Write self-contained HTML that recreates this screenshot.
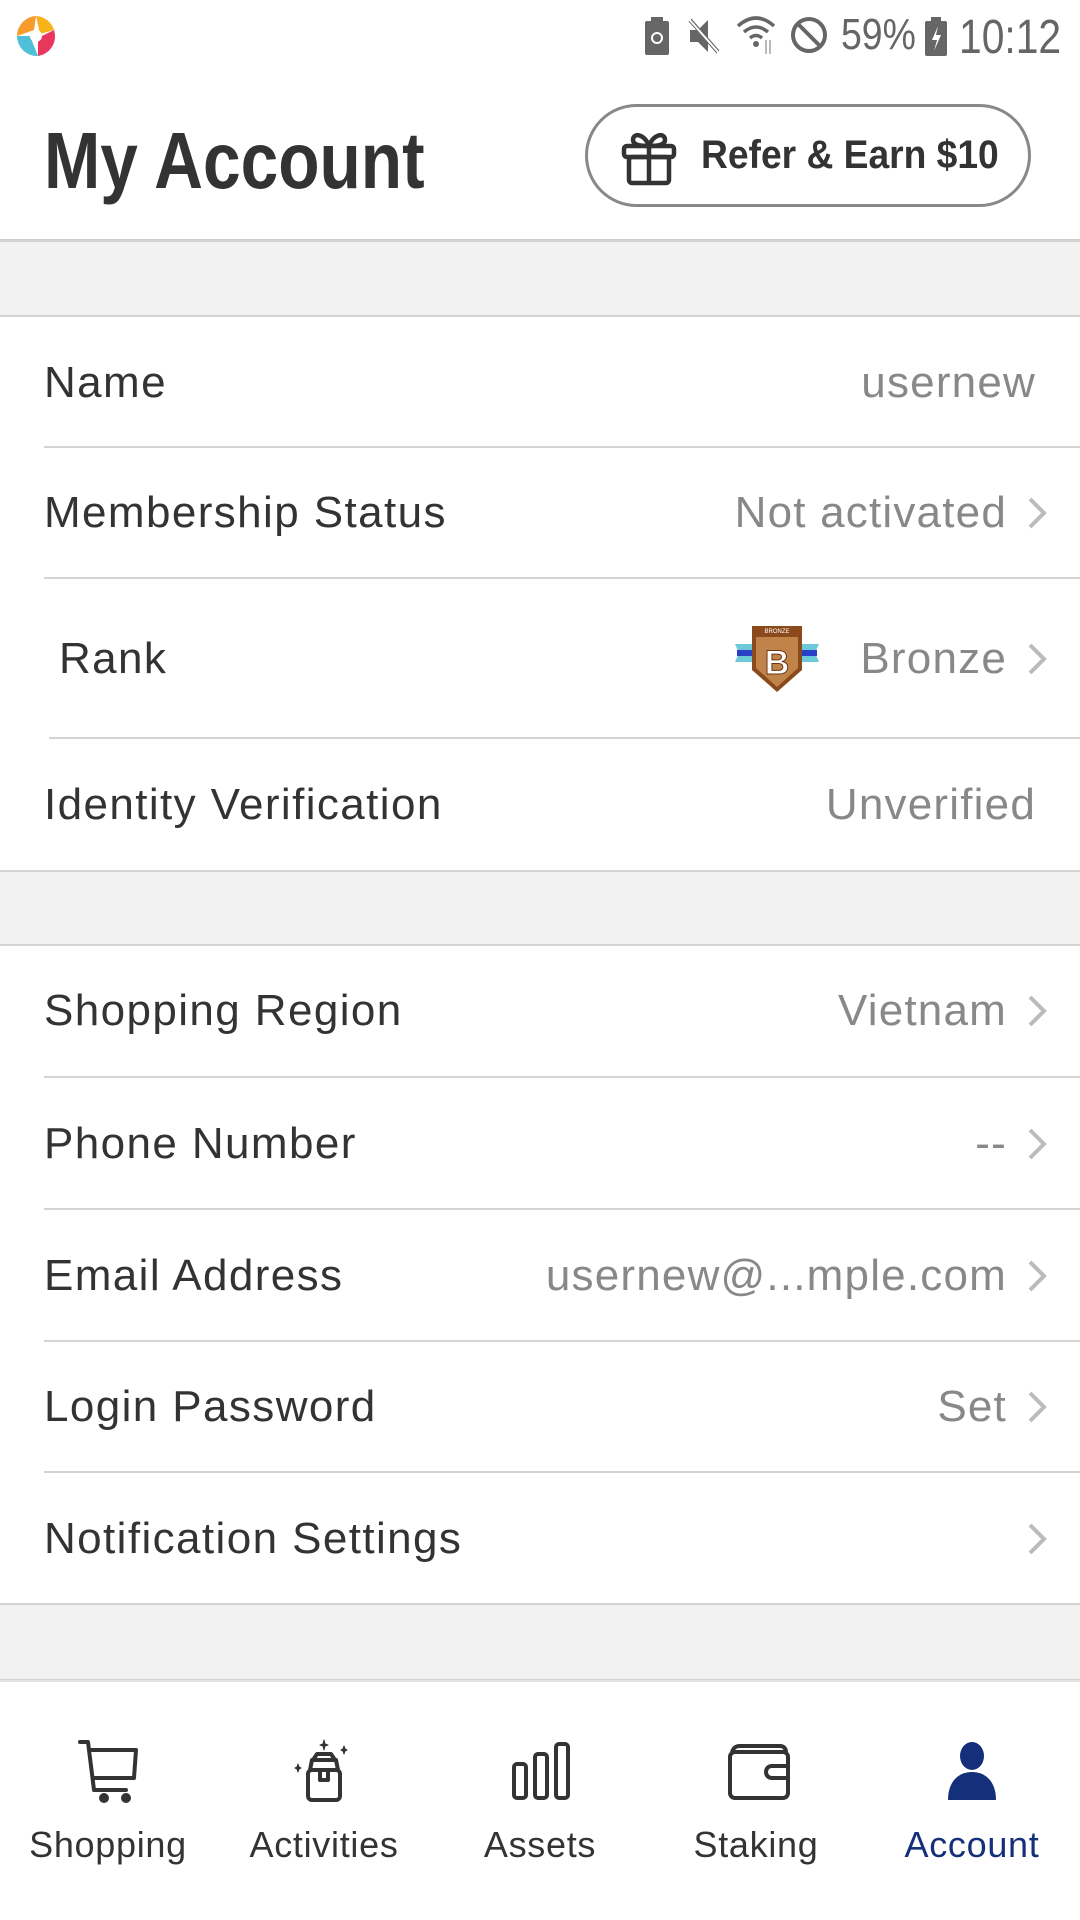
<!DOCTYPE html>
<html><head><meta charset="utf-8"><style>
*{margin:0;padding:0;box-sizing:border-box}
body{width:1080px;height:1920px;background:#fff;font-family:"Liberation Sans",Roboto,sans-serif;position:relative;overflow:hidden;color:#333}
.abs{position:absolute}
.band{position:absolute;left:0;width:1080px;background:#f2f2f2;border-top:2px solid #d4d4d4;border-bottom:2px solid #d4d4d4}
.row{position:absolute;left:0;width:1080px;display:flex;align-items:center}
.row .l{position:absolute;left:44px;font-size:44px;color:#333;letter-spacing:1.4px}
.row .v{position:absolute;right:44px;font-size:44px;color:#888;white-space:nowrap;letter-spacing:1.2px}
.row .v.c{right:73px}
.chev{position:absolute;right:32px;width:22px;height:36px}
.sep{position:absolute;left:44px;right:0;height:2px;background:#d4d4d4}
.nav{position:absolute;top:1680px;left:0;width:1080px;height:240px;border-top:2px solid #e2e2e2;background:#fff}
.ni{position:absolute;top:0;width:216px;text-align:center}
.ni svg{position:absolute;left:78px;top:56px}
.ni span{position:absolute;left:0;right:0;top:142px;font-size:36px;color:#333;letter-spacing:0.7px}
</style></head><body>
<svg class="abs" style="left:12px;top:12px" width="48" height="48" viewBox="0 0 48 48">
<path d="M24 4 A20 20 0 0 1 42 18 L28 22 Z" fill="#f7b318"/>
<path d="M42 18 A20 20 0 0 1 26 44 L26 26 Z" fill="#e8365d"/>
<path d="M26 44 A20 20 0 0 1 5 24 L18 24 Z" fill="#4fc0d8"/>
<path d="M5 24 A20 20 0 0 1 24 4 L22 18 Z" fill="#f79b2c"/>
<circle cx="24" cy="24" r="6" fill="#fff"/>
</svg>
<svg class="abs" style="left:643px;top:16px" width="28" height="40" viewBox="0 0 28 40"><rect x="2" y="5" width="24" height="34" rx="2" fill="#666"/><rect x="8" y="1" width="12" height="5" fill="#666"/><circle cx="14" cy="22" r="5" fill="none" stroke="#fff" stroke-width="2"/></svg>
<svg class="abs" style="left:686px;top:16px" width="36" height="40" viewBox="0 0 36 40"><path d="M4 14h8l10-10v32l-10-10H4z" fill="#666"/><path d="M4 4l28 32" stroke="#666" stroke-width="4"/><path d="M2 2l30 34" stroke="#fff" stroke-width="2"/></svg>
<svg class="abs" style="left:736px;top:14px" width="44" height="42" viewBox="0 0 44 42"><path d="M2 12 Q20 -4 38 12" fill="none" stroke="#666" stroke-width="3.5"/><path d="M8 18 Q20 8 32 18" fill="none" stroke="#666" stroke-width="3.5"/><path d="M14 24 Q20 19 26 24" fill="none" stroke="#666" stroke-width="3.5"/><circle cx="20" cy="30" r="3" fill="#666"/><path d="M30 26v14M34 40V26" stroke="#bbb" stroke-width="2"/></svg>
<svg class="abs" style="left:789px;top:15px" width="40" height="40" viewBox="0 0 40 40"><circle cx="20" cy="20" r="16" fill="none" stroke="#666" stroke-width="4"/><path d="M9 9l22 22" stroke="#666" stroke-width="4"/></svg>
<div class="abs" style="left:841px;top:10px;font-size:44px;color:#666;transform:scaleX(.85);transform-origin:left">59%</div>
<svg class="abs" style="left:924px;top:16px" width="24" height="40" viewBox="0 0 24 40"><rect x="1" y="5" width="22" height="35" rx="2" fill="#666"/><rect x="7" y="1" width="10" height="5" fill="#666"/><path d="M14 10l-6 14h5l-3 11 7-16h-5z" fill="#fff"/></svg>
<div class="abs" style="left:959px;top:10px;font-size:48px;color:#666;transform:scaleX(.85);transform-origin:left">10:12</div>

<div class="abs" style="left:44px;top:115px;font-size:80px;font-weight:bold;color:#333;transform:scaleX(.845);transform-origin:left">My Account</div>
<div class="abs" style="left:585px;top:104px;width:446px;height:103px;border:3px solid #888;border-radius:52px"></div>
<svg class="abs" style="left:620px;top:128px" width="58" height="58" viewBox="0 0 58 58" fill="none" stroke="#333" stroke-width="4.5" stroke-linejoin="round">
<rect x="4" y="18" width="50" height="11" rx="3"/><rect x="9" y="29" width="40" height="26" rx="3"/><path d="M29 18v37"/><path d="M29 18c-4-12-16-14-16-6 0 5 8 6 16 6zM29 18c4-12 16-14 16-6 0 5-8 6-16 6z"/></svg>
<div class="abs" style="left:701px;top:133px;font-size:40px;font-weight:bold;color:#333;transform:scaleX(.93);transform-origin:left">Refer &amp; Earn $10</div>
<div class="abs" style="left:0;top:239px;width:1080px;height:2px;background:#ccc"></div>

<div class="band" style="top:240px;height:77px"></div>
<div class="row" style="top:317px;height:131px"><span class="l">Name</span><span class="v">usernew</span></div>
<div class="sep" style="top:446px"></div>
<div class="row" style="top:448px;height:130px"><span class="l">Membership Status</span><span class="v c">Not activated</span><svg class="chev" viewBox="0 0 22 36"><path d="M4 4l14 14-14 14" fill="none" stroke="#bbb" stroke-width="4"/></svg></div>
<div class="sep" style="top:577px"></div>
<div class="row" style="top:579px;height:159px"><span class="l" style="left:59px">Rank</span><span class="v c">Bronze</span><svg class="chev" viewBox="0 0 22 36"><path d="M4 4l14 14-14 14" fill="none" stroke="#bbb" stroke-width="4"/></svg>
<svg class="abs" style="left:735px;top:45px" width="84" height="70" viewBox="0 0 84 70"><path d="M0 20h20v18H0l4-9z" fill="#6cc9d8"/><path d="M84 20H64v18h20l-4-9z" fill="#6cc9d8"/><rect x="2" y="26" width="80" height="6" fill="#2a3fc8"/><rect x="17" y="2" width="50" height="8" fill="#8b4a1c"/><text x="42" y="9" font-size="6" fill="#fff" text-anchor="middle" font-family="Liberation Sans">BRONZE</text><path d="M17 10h50v36L42 68 17 46z" fill="#8b4a1c"/><path d="M21 13h42v31L42 63 21 44z" fill="#c0834a"/><text x="42" y="50" font-size="34" font-weight="bold" fill="#fff" stroke="#6b3510" stroke-width="1" text-anchor="middle" font-family="Liberation Sans">B</text></svg></div>
<div class="sep" style="top:737px;left:49px"></div>
<div class="row" style="top:739px;height:132px"><span class="l">Identity Verification</span><span class="v">Unverified</span></div>

<div class="band" style="top:870px;height:76px"></div>
<div class="row" style="top:946px;height:130px"><span class="l">Shopping Region</span><span class="v c">Vietnam</span><svg class="chev" viewBox="0 0 22 36"><path d="M4 4l14 14-14 14" fill="none" stroke="#bbb" stroke-width="4"/></svg></div>
<div class="sep" style="top:1076px"></div>
<div class="row" style="top:1078px;height:131px"><span class="l">Phone Number</span><span class="v c">--</span><svg class="chev" viewBox="0 0 22 36"><path d="M4 4l14 14-14 14" fill="none" stroke="#bbb" stroke-width="4"/></svg></div>
<div class="sep" style="top:1208px"></div>
<div class="row" style="top:1210px;height:131px"><span class="l">Email Address</span><span class="v c">usernew@...mple.com</span><svg class="chev" viewBox="0 0 22 36"><path d="M4 4l14 14-14 14" fill="none" stroke="#bbb" stroke-width="4"/></svg></div>
<div class="sep" style="top:1340px"></div>
<div class="row" style="top:1342px;height:130px"><span class="l">Login Password</span><span class="v c">Set</span><svg class="chev" viewBox="0 0 22 36"><path d="M4 4l14 14-14 14" fill="none" stroke="#bbb" stroke-width="4"/></svg></div>
<div class="sep" style="top:1471px"></div>
<div class="row" style="top:1473px;height:131px"><span class="l">Notification Settings</span><svg class="chev" viewBox="0 0 22 36"><path d="M4 4l14 14-14 14" fill="none" stroke="#bbb" stroke-width="4"/></svg></div>
<div class="band" style="top:1603px;height:78px"></div>

<div class="nav">
<div class="ni" style="left:0"><svg width="60" height="66" viewBox="0 0 60 66" fill="none" stroke="#333" stroke-width="4" stroke-linejoin="round" stroke-linecap="round"><path d="M2 4h8l6 48h32"/><path d="M12 12h46l-2 28H16"/><circle cx="26" cy="60" r="3" fill="#333"/><circle cx="48" cy="60" r="3" fill="#333"/></svg><span>Shopping</span></div>
<div class="ni" style="left:216px"><svg width="60" height="66" viewBox="0 0 60 66" fill="none" stroke="#333" stroke-width="4" stroke-linejoin="round"><rect x="14" y="32" width="32" height="30" rx="4"/><path d="M16 32l2-10h24l2 10z"/><path d="M19 22l4-6h14l4 6"/><path d="M26 32v10h8V32"/><path d="M30 2l1 4 3 1-3 1-1 4-1-4-3-1 3-1z M50 8l1 3 2 1-2 1-1 3-1-3-2-1 2-1z M4 26l1 3 2 1-2 1-1 3-1-3-2-1 2-1z" fill="#333" stroke-width="1"/></svg><span>Activities</span></div>
<div class="ni" style="left:432px"><svg width="60" height="66" viewBox="0 0 60 66" fill="none" stroke="#333" stroke-width="4"><rect x="4" y="26" width="12" height="34" rx="3"/><rect x="25" y="16" width="12" height="44" rx="3"/><rect x="46" y="6" width="12" height="54" rx="3"/></svg><span>Assets</span></div>
<div class="ni" style="left:648px"><svg width="66" height="66" viewBox="0 0 66 66" fill="none" stroke="#333" stroke-width="4" stroke-linejoin="round"><path d="M6 16c0-6 4-8 8-8h40c4 0 6 3 6 6"/><rect x="4" y="14" width="58" height="46" rx="5"/><path d="M62 28H46c-4 0-6 3-6 6s2 6 6 6h16"/></svg><span>Staking</span></div>
<div class="ni" style="left:864px"><svg width="60" height="66" viewBox="0 0 60 66"><ellipse cx="30" cy="18" rx="12" ry="14" fill="#15307a"/><path d="M6 62c0-18 10-28 24-28s24 10 24 28z" fill="#15307a"/></svg><span style="color:#15307a">Account</span></div>
</div>
</body></html>
